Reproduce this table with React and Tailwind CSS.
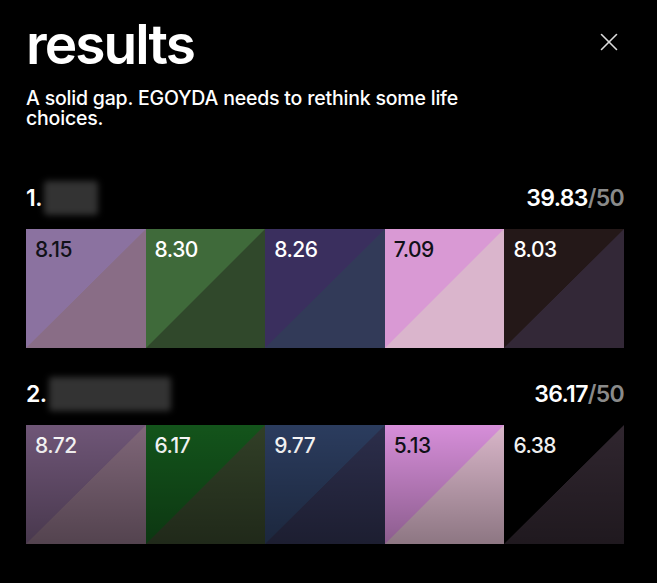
import React from "react";
import { X } from "lucide-react";

// each player: total + five swatches (top = guess, bottom = target)
const results = [
  {
    rank: 1,
    nameWidth: "w-[54px]",
    total: "39.83",
    swatches: [
      { score: "8.15", top: "#8b72a0", bottom: "#896d86", dark: true },
      { score: "8.30", top: "#3f6a3a", bottom: "#30482b" },
      { score: "8.26", top: "#3a2f5e", bottom: "#323a58" },
      { score: "7.09", top: "#d999d4", bottom: "#dab5cc", dark: true },
      { score: "8.03", top: "#241818", bottom: "#332837" },
    ],
  },
  {
    rank: 2,
    nameWidth: "w-[122px]",
    total: "36.17",
    fade: true,
    swatches: [
      { score: "8.72", top: "#6f5677", bottom: "#806779" },
      { score: "6.17", top: "#13541b", bottom: "#313f27" },
      { score: "9.77", top: "#2b3c5e", bottom: "#2c2e4b" },
      { score: "5.13", top: "#d68ed9", bottom: "#d9b6c9", dark: true },
      { score: "6.38", top: "#000000", bottom: "#30262f" },
    ],
  },
];

const Swatch = ({ s }) => (
  <div
    className="h-[119px] pl-[9px] pt-[9px]"
    style={{ background: `linear-gradient(to bottom right, ${s.top} 49.8%, ${s.bottom} 50.2%)` }}
  >
    <span className={`text-[21px] font-medium leading-[24px] tracking-tight ${s.dark ? "text-[#111118]" : "text-white"}`}>
      {s.score}
    </span>
  </div>
);

export default function App() {
  return (
    <div className="min-h-[583px] bg-black pl-[26px] pr-[33px] pt-[17px] font-['Inter','Liberation_Sans',sans-serif] text-white">
      <div className="flex items-start justify-between">
        <h1 className="text-[55px] font-semibold leading-none tracking-[-0.035em]">results</h1>
        <button className="mt-[10px] text-[#dcdcdc]">
          <X size={30} strokeWidth={1.3} />
        </button>
      </div>
      <p className="mt-[16px] max-w-[480px] text-[19.5px] font-medium leading-[20px] tracking-[-0.01em]">
        A solid gap. EGOYDA needs to rethink some life choices.
      </p>

      <div className="mt-[53px] flex flex-col gap-[29px]">
        {results.map((r) => (
          <div key={r.rank}>
            <div className="flex h-[34px] items-center justify-between">
              <div className="flex items-center">
                <span className="text-[23px] font-semibold tracking-tight">{r.rank}.</span>
                <div className={`ml-[2px] h-[34px] ${r.nameWidth} rounded-[3px] bg-[#333333] blur-[3px]`}></div>
              </div>
              <div className="text-[23px] font-semibold tracking-[-0.03em]">
                {r.total}
                <span className="text-[#8a8a8a]">/50</span>
              </div>
            </div>
            <div className="relative mt-[14px] grid grid-cols-5">
              {r.swatches.map((s, i) => (
                <Swatch key={i} s={s} />
              ))}
              {r.fade && (
                <div className="pointer-events-none absolute inset-0 bg-gradient-to-b from-transparent to-black/35"></div>
              )}
            </div>
          </div>
        ))}
      </div>
    </div>
  );
}
